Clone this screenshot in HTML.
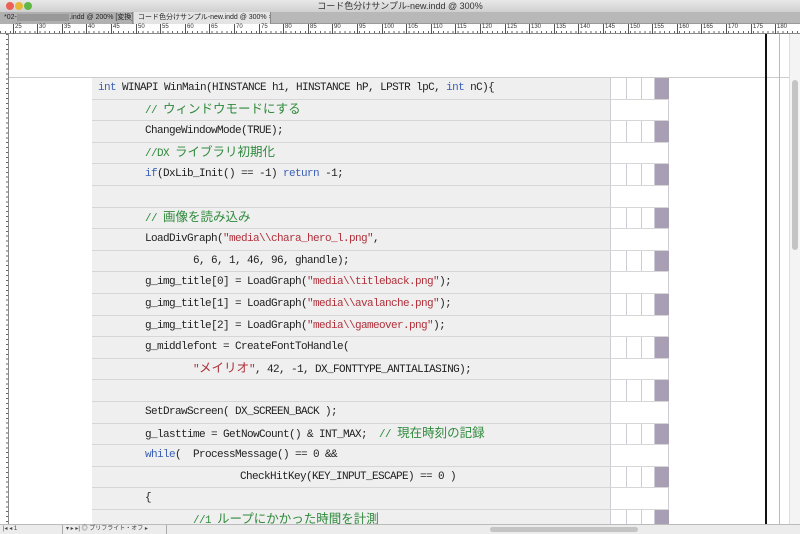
<!DOCTYPE html>
<html><head><meta charset="utf-8"><style>
*{margin:0;padding:0;box-sizing:border-box}
body{width:800px;height:534px;overflow:hidden;background:#fff;position:relative;font-family:"Liberation Sans","Noto Sans CJK JP",sans-serif}
.title{position:absolute;left:0;top:0;width:800px;height:12px;background:linear-gradient(#e8e8e8,#d0d0d0);font-size:9px;text-align:center;line-height:12px;color:#333}
.dot{position:absolute;top:2px;width:8px;height:8px;border-radius:50%}
.tabs{position:absolute;left:0;top:12px;width:800px;height:12px;background:#b8b8b8;border-bottom:1px solid #999}
.tab{position:absolute;top:0;height:12px;font-size:7px;line-height:12px;padding-left:4px;color:#222;white-space:nowrap;overflow:hidden}
.ruler{position:absolute;left:0;top:24px;width:800px;height:10px;background:#fff;border-bottom:1px solid #888;
background-image:repeating-linear-gradient(90deg,#666 0 1px,transparent 1px 4.92px);background-size:100% 3px;background-repeat:no-repeat;background-position:0 7px}
.ruler span{position:absolute;top:0;font-size:6px;line-height:7px;border-left:1px solid #555;padding-left:1px;height:10px;color:#333}
.lruler{position:absolute;left:0;top:34px;width:9px;height:490px;border-right:1px solid #888;background-image:repeating-linear-gradient(180deg,#666 0 1px,transparent 1px 4.92px);background-size:3px 100%;background-repeat:no-repeat;background-position:6px 0}
.row{position:absolute;left:92px;width:577px;height:21.6px;border-bottom:1px solid #d6d6d6}
.code{position:absolute;left:0;top:0;width:518px;height:100%;background:#efefef;font-family:"Liberation Mono","Noto Sans CJK JP",monospace;font-size:11px;letter-spacing:-0.6px;line-height:21px;color:#222;white-space:pre}
.c{position:absolute;top:0;height:100%;border-left:1px solid #cfcad8;background:#fff}
.k{color:#3a5fb5}.s{color:#b0303a}.g{color:#2f8a3c}.j{font-size:12.5px;letter-spacing:0}
</style></head><body>
<div class="title"><span>コード色分けサンプル-new.indd @ 300%</span>
<div class="dot" style="left:6px;background:#ec5f55"></div><div class="dot" style="left:15px;background:#e8b73a"></div><div class="dot" style="left:24px;background:#5fb845"></div></div>
<div class="tabs"><div class="tab" style="left:0;width:133px;background:#b0b0b0;border-right:1px solid #888">*02-<span style="background:#999;color:#999">xxxxxxxxxxxxxxx</span>.indd @ 200% [変換] ×</div>
<div class="tab" style="left:134px;width:137px;background:#e4e4e4;border-right:1px solid #888">コード色分けサンプル-new.indd @ 300% ×</div></div>
<div class="ruler">
<span style="left:13px">25</span><span style="left:37px">30</span><span style="left:62px">35</span><span style="left:86px">40</span><span style="left:111px">45</span><span style="left:136px">50</span><span style="left:160px">55</span><span style="left:185px">60</span><span style="left:209px">65</span><span style="left:234px">70</span><span style="left:259px">75</span><span style="left:283px">80</span><span style="left:308px">85</span><span style="left:332px">90</span><span style="left:357px">95</span><span style="left:382px">100</span><span style="left:406px">105</span><span style="left:431px">110</span><span style="left:455px">115</span><span style="left:480px">120</span><span style="left:505px">125</span><span style="left:529px">130</span><span style="left:554px">135</span><span style="left:578px">140</span><span style="left:603px">145</span><span style="left:628px">150</span><span style="left:652px">155</span><span style="left:677px">160</span><span style="left:701px">165</span><span style="left:726px">170</span><span style="left:751px">175</span><span style="left:775px">180</span>
</div>
<div class="lruler"></div>
<div style="position:absolute;left:9px;top:77px;width:780px;height:1px;background:#ccc"></div>
<div style="position:absolute;left:765px;top:34px;width:2px;height:490px;background:#111"></div>
<div style="position:absolute;left:779px;top:34px;width:1px;height:490px;background:#f4a0a8"></div>
<div style="position:absolute;left:789px;top:34px;width:11px;height:490px;background:#f4f4f4;border-left:1px solid #ddd"></div>
<div style="position:absolute;left:792px;top:80px;width:6px;height:170px;background:#c4c4c4;border-radius:3px"></div>

<div id="rows"></div>
<div style="position:absolute;left:0;top:524px;width:800px;height:10px;background:#ececec;border-top:1px solid #bbb;font-size:6px;line-height:9px;color:#444">
<span style="position:absolute;left:3px">|◂ ◂ 1</span><span style="position:absolute;left:62px;top:0;width:105px;height:9px;border-left:1px solid #aaa;border-right:1px solid #aaa;padding-left:3px">▾ ▸ ▸| ◎ プリフライト・オフ ▸ </span>
<div style="position:absolute;left:490px;top:2px;width:148px;height:5px;background:#c4c4c4;border-radius:3px"></div></div>
<script>
var L=[
[0,'<span class="k">int</span> WINAPI WinMain(HINSTANCE h1, HINSTANCE hP, LPSTR lpC, <span class="k">int</span> nC){'],
[1,'<span class="g">// <span class="j">ウィンドウモードにする</span></span>'],
[1,'ChangeWindowMode(TRUE);'],
[1,'<span class="g">//DX <span class="j">ライブラリ初期化</span></span>'],
[1,'<span class="k">if</span>(DxLib_Init() == -1) <span class="k">return</span> -1;'],
[1,''],
[1,'<span class="g">// <span class="j">画像を読み込み</span></span>'],
[1,'LoadDivGraph(<span class="s">"media\\\\chara_hero_l.png"</span>,'],
[2,'6, 6, 1, 46, 96, ghandle);'],
[1,'g_img_title[0] = LoadGraph(<span class="s">"media\\\\titleback.png"</span>);'],
[1,'g_img_title[1] = LoadGraph(<span class="s">"media\\\\avalanche.png"</span>);'],
[1,'g_img_title[2] = LoadGraph(<span class="s">"media\\\\gameover.png"</span>);'],
[1,'g_middlefont = CreateFontToHandle('],
[2,'<span class="s">"<span class="j">メイリオ</span>"</span>, 42, -1, DX_FONTTYPE_ANTIALIASING);'],
[1,''],
[1,'SetDrawScreen( DX_SCREEN_BACK );'],
[1,'g_lasttime = GetNowCount() &amp; INT_MAX;  <span class="g">// <span class="j">現在時刻の記録</span></span>'],
[1,'<span class="k">while</span>(  ProcessMessage() == 0 &amp;&amp;'],
[3,'CheckHitKey(KEY_INPUT_ESCAPE) == 0 )'],
[1,'{'],
[2,'<span class="g">//1 <span class="j">ループにかかった時間を計測</span></span>']];
var ind=[6,53,101,148],h='';
for(var i=0;i<L.length;i++){var t=78+i*21.6;
h+='<div class="row" style="top:'+t+'px"><div class="code" style="padding-left:'+ind[L[i][0]]+'px">'+L[i][1]+'</div>';
if(i%2==0){h+='<div class="c" style="left:518px;width:16px"></div><div class="c" style="left:534px;width:15px"></div><div class="c" style="left:549px;width:14px;border-right:1px solid #cfcad8"></div><div style="position:absolute;left:563px;top:0;width:14px;height:100%;background:#a89fb5"></div>';}
else h+='<div class="c" style="left:518px;width:59px;border-right:1px solid #cfcad8"></div>';
h+='</div>';}
document.getElementById('rows').innerHTML=h;
</script>
</body></html>
